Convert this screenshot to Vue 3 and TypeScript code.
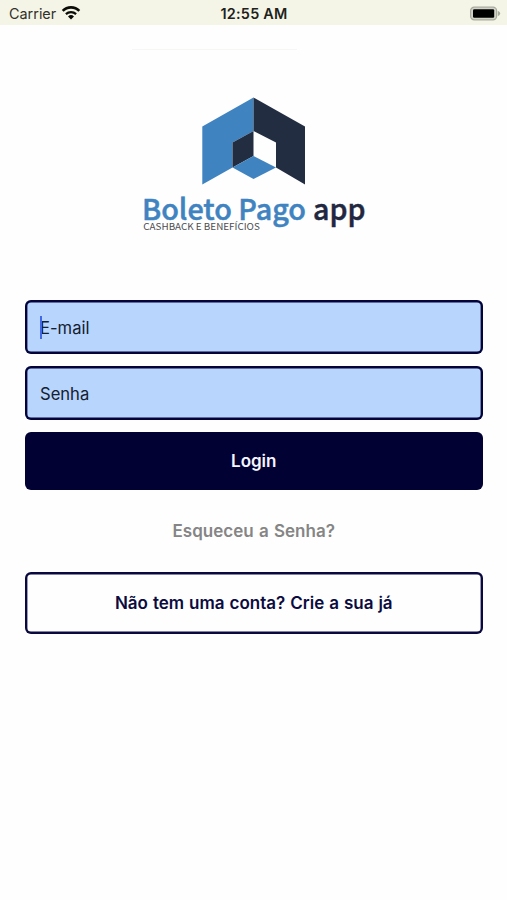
<script setup lang="ts">
import { ref } from 'vue'

const email = ref('')
const password = ref('')
</script>

<template>
  <div class="screen">
    <header class="status">
      <div class="carrier">
        <span class="carrier-name">Carrier</span>
        <svg class="wifi" width="20" height="16" viewBox="0 0 20 16" aria-hidden="true">
          <path d="M1.7 5.9A11.6 11.6 0 0 1 18.3 5.9" fill="none" stroke="#0b0c08" stroke-width="2.6" />
          <path d="M4.9 9.1A7.4 7.4 0 0 1 15.1 9.1" fill="none" stroke="#0b0c08" stroke-width="2.2" />
          <path d="M7 11.4A4.3 4.3 0 0 1 13 11.4L10 14.4Z" fill="#0b0c08" />
        </svg>
      </div>
      <span class="time">12:55 AM</span>
      <svg class="battery" width="32" height="16" viewBox="0 0 32 16" aria-hidden="true">
        <rect x="1.6" y="1.2" width="26" height="12.6" rx="3.6" fill="#d2d3c6" stroke="#a9aa9f" stroke-width="1.2" />
        <rect x="4" y="3.2" width="21.2" height="8.6" rx="1.2" fill="#000" />
        <path d="M28.8 4.8Q31.2 6 31.2 7.5T28.8 10.2Z" fill="#a9aa9f" />
      </svg>
    </header>

    <main class="content">
      <div class="divider"></div>
      <svg class="logo" width="230" height="140" viewBox="140 95 230 140" role="img">
        <path d="M253.5 97.5L202.3 126.5V184.5L232.5 167.5V142.5L253.5 131Z" fill="#4083c1" />
        <path d="M253.5 97.5L305 126.5V184.5L276 167.5V142.5L253.5 131Z" fill="#222d42" />
        <path d="M253.5 131L232.5 142.5V167.5L253.5 156Z" fill="#222d42" />
        <path d="M253.5 156L276 167.5L253.5 179L232.5 167.5Z" fill="#4083c1" />
        <text class="brand blue" x="142" y="219.5" textLength="164" lengthAdjust="spacingAndGlyphs">Boleto Pago</text>
        <text class="brand navy" x="313" y="219.5" textLength="52.5" lengthAdjust="spacingAndGlyphs">app</text>
        <text class="tagline" x="143.3" y="230" textLength="116.5" lengthAdjust="spacingAndGlyphs">CASHBACK E BENEFÍCIOS</text>
      </svg>

      <form class="form" @submit.prevent>
        <label class="field">
          <input v-model="email" type="email" placeholder="E-mail" />
          <span class="caret"></span>
        </label>
        <label class="field">
          <input v-model="password" type="password" placeholder="Senha" />
        </label>
        <button class="login" type="submit">Login</button>
        <a class="forgot">Esqueceu a Senha?</a>
        <button class="signup" type="button">Não tem uma conta? Crie a sua já</button>
      </form>
    </main>
  </div>
</template>

<style>
body {
  margin: 0;
  background: #fefefe;
}
</style>

<style scoped>
.screen {
  height: 900px;
  background: #fefefe;
  font-family: Inter, "Liberation Sans", sans-serif;
  overflow: hidden;
}
.status {
  box-sizing: border-box;
  height: 25px;
  padding: 2px 6px 0 9px;
  background: #f5f5e7;
  display: grid;
  grid-template-columns: 1fr auto 1fr;
  align-items: center;
}
.carrier {
  display: flex;
  align-items: center;
  gap: 4.5px;
}
.wifi {
  margin-top: -2px;
}
.carrier-name {
  font-size: 14.4px;
  line-height: 20px;
  color: #30312b;
}
.time {
  margin-right: 2px;
  font-size: 14.4px;
  line-height: 20px;
  font-weight: 600;
  letter-spacing: 0.25px;
  color: #20211b;
}
.battery {
  justify-self: end;
}
.content {
  display: flex;
  flex-direction: column;
}
.divider {
  width: 165px;
  height: 1px;
  margin: 24px 0 45px 132px;
  background: #f6f6f5;
}
.logo {
  display: block;
  margin-left: 140px;
}
.brand {
  font-family: "Noto Sans CJK SC", "Noto Sans", sans-serif;
  font-size: 28.8px;
  font-weight: 500;
  stroke-width: 0.5px;
}
.blue {
  fill: #4083c1;
  stroke: #4083c1;
}
.navy {
  fill: #222740;
  stroke: #222740;
}
.tagline {
  font-family: "Noto Sans CJK SC", "Noto Sans", sans-serif;
  font-size: 9px;
  fill: #4b4c50;
}
.form {
  display: flex;
  flex-direction: column;
  padding: 65px 24.5px 0 25px;
}
.field {
  position: relative;
  box-sizing: border-box;
  height: 54px;
  margin-bottom: 12px;
  border-radius: 6px;
  background: #b7d5fd;
  box-shadow: inset 0 0 0 2.4px #04043a;
  display: flex;
}
.field input {
  flex: 1;
  min-width: 0;
  padding: 1px 15px 0;
  border: 0;
  outline: 0;
  background: transparent;
  font-family: inherit;
  font-size: 16.6px;
  color: #14202f;
}
.field input::placeholder {
  color: #14202f;
  opacity: 1;
}
.caret {
  position: absolute;
  left: 15px;
  top: 16px;
  width: 2px;
  height: 23px;
  background: #4268e8;
}
.login,
.signup {
  box-sizing: border-box;
  font-family: inherit;
  font-size: 17px;
  font-weight: 600;
  word-spacing: 0.7px;
  border: 0;
  border-radius: 6px;
}
.login {
  height: 58px;
  padding: 0;
  background: #010134;
  color: #f5f6ff;
}
.forgot {
  margin: 29px 0 28.5px;
  font-size: 17px;
  line-height: 24px;
  font-weight: 600;
  word-spacing: 1px;
  text-align: center;
  color: #858585;
}
.signup {
  height: 62.5px;
  padding: 0;
  background: #fefefe;
  box-shadow: inset 0 0 0 2.4px #090940;
  color: #0b0b40;
}
</style>
